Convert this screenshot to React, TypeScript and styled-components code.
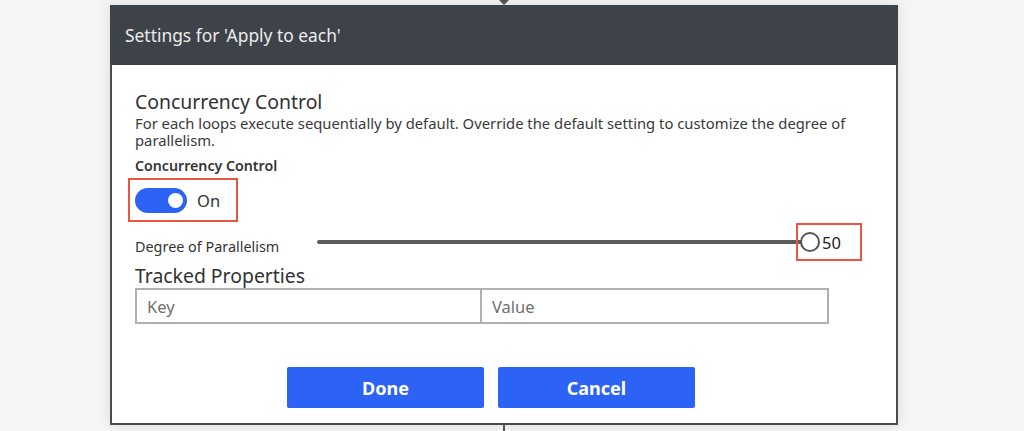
import styled, { createGlobalStyle } from "styled-components";

const BLUE = "#2c63f5";
const MARK = "#e9573f";
const FONT = `"Segoe UI", "Noto Sans", "Open Sans", sans-serif`;

const GlobalStyle = createGlobalStyle`
  html, body {
    margin: 0;
    padding: 0;
    background: #f6f6f6;
    font-family: ${FONT};
  }
`;

const Page = styled.div`
  width: 1024px;
  height: 431px;
  overflow: hidden;
  padding-left: 110px;
  box-sizing: border-box;
`;

const Column = styled.div`
  width: 788px;
  display: flex;
  flex-direction: column;
  align-items: center;
`;

const TopArrow = styled.svg`
  display: block;
  width: 12px;
  height: 5px;
`;

const Stem = styled.div`
  width: 2px;
  height: 10px;
  background: #555;
`;

const Dialog = styled.div`
  width: 788px;
  box-sizing: border-box;
  border: 2px solid #4a4c50;
  border-top: none;
  background: #fff;
  box-shadow: 0 0 14px rgba(0, 0, 0, 0.12);
`;

const Header = styled.div`
  height: 60px;
  margin: 0 -2px;
  background: #3e4249;
  color: #ececec;
  font-size: 17.4px;
  display: flex;
  align-items: center;
  padding-left: 15px;
`;

const Body = styled.div`
  padding: 25px 23px 15px;
  color: #333;
`;

const SectionTitle = styled.div`
  font-size: 19.4px;
  line-height: 24px;
  color: #323232;
`;

const Description = styled.div`
  font-size: 14.8px;
  line-height: 17px;
  margin-top: 1px;
  color: #3a3a3a;
`;

const FieldLabel = styled.div<{ $bold?: boolean }>`
  font-size: ${(p) => (p.$bold ? 14.2 : 14.4)}px;
  line-height: 17px;
  font-weight: ${(p) => (p.$bold ? 600 : 400)};
  color: #333;
`;

const SwitchLabel = styled(FieldLabel)`
  margin-top: 8px;
`;

const Highlight = styled.div`
  display: flex;
  align-items: center;
  border: 2px solid ${MARK};
  box-sizing: border-box;
`;

const ToggleBox = styled(Highlight)`
  margin: 4px 0 0 -7px;
  width: 110px;
  height: 44px;
  padding-left: 5px;
  gap: 10px;
`;

const Toggle = styled.div<{ $on: boolean }>`
  width: 52px;
  height: 25px;
  border-radius: 13px;
  background: ${(p) => (p.$on ? BLUE : "#fff")};
  position: relative;
  &::after {
    content: "";
    position: absolute;
    top: 5px;
    left: ${(p) => (p.$on ? "33px" : "5px")};
    width: 15px;
    height: 15px;
    border-radius: 50%;
    background: #fff;
  }
`;

const ToggleText = styled.span`
  font-size: 16.5px;
  color: #333;
`;

const SliderRow = styled.div`
  display: flex;
  align-items: center;
  height: 38px;
  margin-top: 1px;
`;

const SliderLabel = styled(FieldLabel)`
  width: 182px;
  padding-top: 8px;
`;

const Track = styled.div`
  width: 491px;
  height: 4px;
  border-radius: 2px;
  background: #5c5c5c;
`;

const ValueBox = styled(Highlight)`
  width: 66px;
  height: 38px;
  margin-left: -12px;
  padding-left: 2px;
  gap: 2px;
`;

const Thumb = styled.div`
  width: 20px;
  height: 20px;
  box-sizing: border-box;
  border-radius: 50%;
  border: 2px solid #555;
  background: #fff;
`;

const SliderValue = styled.span`
  font-size: 16.5px;
  color: #222;
`;

const TrackedTitle = styled(SectionTitle)`
  margin-top: 3px;
`;

const InputRow = styled.div`
  display: flex;
  width: 694px;
`;

const Input = styled.input<{ $last?: boolean }>`
  width: 347px;
  height: 36px;
  box-sizing: border-box;
  border: 2px solid #b0b0b0;
  border-left-width: ${(p) => (p.$last ? 0 : 2)}px;
  padding: 0 10px;
  font-family: ${FONT};
  font-size: 16.5px;
  color: #333;
  outline: none;
  &::placeholder {
    color: #707070;
  }
`;

const ButtonRow = styled.div`
  display: flex;
  justify-content: center;
  gap: 14px;
  margin-top: 43px;
  padding-right: 26px;
`;

const Button = styled.button`
  width: 197px;
  height: 41px;
  border: none;
  border-radius: 2px;
  background: ${BLUE};
  color: #fff;
  font-family: ${FONT};
  font-size: 18px;
  font-weight: 700;
  cursor: pointer;
`;

export default function App() {
  return (
    <>
      <GlobalStyle />
      <Page>
        <Column>
          <TopArrow viewBox="0 0 12 5">
            <path d="M1 0 L11 0 L6 5 Z" fill="#555" />
          </TopArrow>
          <Dialog>
            <Header>Settings for 'Apply to each'</Header>
            <Body>
              <SectionTitle>Concurrency Control</SectionTitle>
              <Description>
                For each loops execute sequentially by default. Override the default setting to customize the degree of
                parallelism.
              </Description>
              <SwitchLabel $bold>Concurrency Control</SwitchLabel>
              <ToggleBox>
                <Toggle $on />
                <ToggleText>On</ToggleText>
              </ToggleBox>
              <SliderRow>
                <SliderLabel>Degree of Parallelism</SliderLabel>
                <Track />
                <ValueBox>
                  <Thumb />
                  <SliderValue>50</SliderValue>
                </ValueBox>
              </SliderRow>
              <TrackedTitle>Tracked Properties</TrackedTitle>
              <InputRow>
                <Input placeholder="Key" />
                <Input $last placeholder="Value" />
              </InputRow>
              <ButtonRow>
                <Button>Done</Button>
                <Button>Cancel</Button>
              </ButtonRow>
            </Body>
          </Dialog>
          <Stem />
        </Column>
      </Page>
    </>
  );
}
